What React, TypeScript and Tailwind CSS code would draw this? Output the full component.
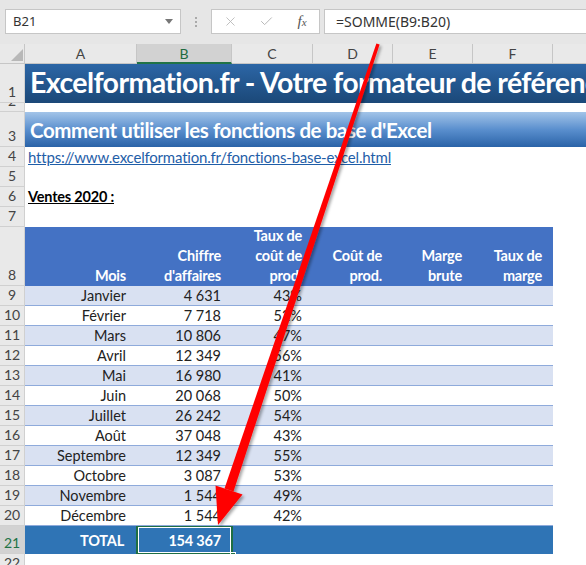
import React from "react";
import { X, Check } from "lucide-react";

const months: [string, string, string][] = [
  ["Janvier", "4\u00a0631", "43%"],
  ["Février", "7\u00a0718", "52%"],
  ["Mars", "10\u00a0806", "47%"],
  ["Avril", "12\u00a0349", "56%"],
  ["Mai", "16\u00a0980", "41%"],
  ["Juin", "20\u00a0068", "50%"],
  ["Juillet", "26\u00a0242", "54%"],
  ["Août", "37\u00a0048", "43%"],
  ["Septembre", "12\u00a0349", "55%"],
  ["Octobre", "3\u00a0087", "53%"],
  ["Novembre", "1\u00a0544", "49%"],
  ["Décembre", "1\u00a0544", "42%"],
];

function RH({ n, h, sel }: { n: number; h: string; sel?: boolean }) {
  return (
    <div
      className={`${h} w-[25px] shrink-0 overflow-hidden border-r border-b border-[#d0d0d0] flex items-end justify-center text-[14px] leading-[20px] ${
        sel ? "bg-[#d2d2d2] text-[#217346]" : "bg-[#e9e9e9] text-[#444]"
      }`}
    >
      <span>{n}</span>
    </div>
  );
}

function Row({
  n,
  h,
  sel,
  children,
}: {
  n: number;
  h: string;
  sel?: boolean;
  children?: React.ReactNode;
}) {
  return (
    <div className={`flex ${h}`}>
      <RH n={n} h={h} sel={sel} />
      <div className="flex-1 min-w-0 overflow-hidden bg-white">{children}</div>
    </div>
  );
}

export default function App() {
  return (
    <div className="relative w-[586px] h-[565px] overflow-hidden bg-white font-['Lato','Liberation_Sans',sans-serif] text-[#222]">
      {/* Toolbar */}
      <div className="h-[44px] bg-[#e6e6e6] flex items-start pt-[9px] font-['Noto_Sans','Open_Sans',sans-serif]">
        <div className="ml-[5px] w-[176px] h-[25px] bg-white border border-[#c6c6c6] flex items-center justify-between pl-[7px] pr-[7px]">
          <span className="text-[13px] text-[#333]">B21</span>
          <svg width="8" height="5" viewBox="0 0 8 5">
            <path d="M0 0 L8 0 L4 5 Z" fill="#777" />
          </svg>
        </div>
        <div className="w-[30px] h-[25px] flex flex-col items-center justify-center gap-[2px]">
          <span className="w-[2px] h-[2px] bg-[#aaa]" />
          <span className="w-[2px] h-[2px] bg-[#aaa]" />
          <span className="w-[2px] h-[2px] bg-[#aaa]" />
        </div>
        <div className="w-[109px] h-[25px] bg-white border border-[#c6c6c6] flex items-center">
          <div className="w-[36px] flex justify-center pl-[1px]">
            <X size={15} strokeWidth={1.4} color="#b8b8b8" />
          </div>
          <div className="w-[37px] flex justify-center">
            <Check size={15} strokeWidth={1.6} color="#b8b8b8" />
          </div>
          <div className="w-[34px] flex justify-center">
            <span className="font-['Liberation_Serif',serif] italic text-[15px] text-[#555] leading-none">
              f<span className="text-[11px]">x</span>
            </span>
          </div>
        </div>
        <div className="ml-[4px] flex-1 h-[25px] bg-white border border-[#c6c6c6] border-r-0 flex items-center pl-[11px]">
          <span className="text-[14px] text-[#333]">=SOMME(B9:B20)</span>
        </div>
      </div>

      {/* Column headers */}
      <div className="flex h-[20px] bg-[#e9e9e9] text-[14px] text-[#444]">
        <div className="w-[25px] shrink-0 border-r border-b border-[#c6c6c6] relative">
          <svg className="absolute left-[11px] top-[5px]" width="12" height="12" viewBox="0 0 12 12">
            <path d="M12 0 L12 12 L0 12 Z" fill="#b8b8b8" />
          </svg>
        </div>
        <div className="w-[112px] shrink-0 border-r border-b border-[#c6c6c6] flex items-center justify-center">A</div>
        <div className="w-[95px] shrink-0 border-r border-[#c6c6c6] border-b-2 border-b-[#217346] bg-[#d2d2d2] text-[#1e6b40] flex items-center justify-center">B</div>
        <div className="w-[81px] shrink-0 border-r border-b border-[#c6c6c6] flex items-center justify-center">C</div>
        <div className="w-[80px] shrink-0 border-r border-b border-[#c6c6c6] flex items-center justify-center">D</div>
        <div className="w-[80px] shrink-0 border-r border-b border-[#c6c6c6] flex items-center justify-center">E</div>
        <div className="w-[80px] shrink-0 border-r border-b border-[#c6c6c6] flex items-center justify-center">F</div>
        <div className="flex-1 border-b border-[#c6c6c6]" />
      </div>

      {/* Row 1 */}
      <Row n={1} h="h-[39px]">
        <div className="h-full bg-gradient-to-b from-[#2c66a6] to-[#1b4878] flex items-end pl-[5px] pb-[4px] whitespace-nowrap">
          <span className="text-white font-bold text-[28.5px] leading-[33px] tracking-[-0.6px]">
            Excelformation.fr - Votre formateur de référence
          </span>
        </div>
      </Row>
      <Row n={2} h="h-[9px]" />
      <Row n={3} h="h-[35px]">
        <div className="h-full bg-gradient-to-b from-[#a3c4e8] via-[#5a8fce] to-[#2a63a8] flex items-end pl-[5px] pb-[4px] whitespace-nowrap">
          <span className="text-white font-bold text-[20.5px] leading-[26px] tracking-[-0.4px]">
            Comment utiliser les fonctions de base d'Excel
          </span>
        </div>
      </Row>
      <Row n={4} h="h-[20px]">
        <div className="pl-[3px] leading-[20px] text-[15px] tracking-[-0.2px] text-[#1f5ea8] underline whitespace-nowrap">
          https://www.excelformation.fr/fonctions-base-excel.html
        </div>
      </Row>
      <Row n={5} h="h-[20px]" />
      <Row n={6} h="h-[20px]">
        <div className="pl-[3px] leading-[20px] text-[14.5px] tracking-[-0.2px] font-bold underline text-black whitespace-nowrap">
          Ventes 2020 :
        </div>
      </Row>
      <Row n={7} h="h-[20px]" />

      {/* Row 8 header */}
      <Row n={8} h="h-[59px]">
        <div className="h-full flex w-[528px] bg-[#4472c4] text-white font-bold text-[14.5px] leading-[20px] tracking-[-0.2px] text-right">
          <div className="w-[112px] flex flex-col justify-end pr-[11px]">Mois</div>
          <div className="w-[95px] flex flex-col justify-end pr-[11px]">
            <span>Chiffre</span>
            <span>d'affaires</span>
          </div>
          <div className="w-[81px] flex flex-col justify-end pr-[11px]">
            <span>Taux de</span>
            <span>coût de</span>
            <span>prod.</span>
          </div>
          <div className="w-[80px] flex flex-col justify-end pr-[11px]">
            <span>Coût de</span>
            <span>prod.</span>
          </div>
          <div className="w-[80px] flex flex-col justify-end pr-[11px]">
            <span>Marge</span>
            <span>brute</span>
          </div>
          <div className="w-[80px] flex flex-col justify-end pr-[11px]">
            <span>Taux de</span>
            <span>marge</span>
          </div>
        </div>
      </Row>

      {months.map(([m, v, p], i) => (
        <Row key={m} n={9 + i} h="h-[20px]">
          <div
            className={`h-full w-[528px] flex border-b border-[#8eaadb] text-[14.5px] leading-[20px] text-[#222] text-right ${
              i % 2 === 0 ? "bg-[#d9e1f2]" : "bg-white"
            }`}
          >
            <div className="w-[112px] pr-[11px]">{m}</div>
            <div className="w-[95px] pr-[11px]">{v}</div>
            <div className="w-[81px] pr-[11px]">{p}</div>
            <div className="w-[80px]" />
            <div className="w-[80px]" />
            <div className="w-[80px]" />
          </div>
        </Row>
      ))}

      {/* Total */}
      <Row n={21} h="h-[28px]" sel>
        <div className="h-full w-[528px] flex bg-[#2f74b5] text-white font-bold text-[14.5px] tracking-[-0.2px] text-right">
          <div className="w-[112px] pr-[13px] flex items-center justify-end pt-[1px]">TOTAL</div>
          <div className="w-[95px] pr-[11px] flex items-center justify-end pt-[1px] relative">
            154&nbsp;367
            <div className="absolute left-[-1px] top-[-1px] right-[-1px] bottom-[-1px] border-2 border-[#1e6e43]">
              <div className="absolute inset-0 border border-white" />
            </div>
            <div className="absolute right-[-4px] bottom-[-4px] w-[6px] h-[6px] bg-[#1e6e43] border border-white" />
          </div>
        </div>
      </Row>
      <Row n={22} h="h-[20px]" />

      {/* Red arrow overlay */}
      <svg className="absolute left-0 top-0 pointer-events-none" width="586" height="565" viewBox="0 0 586 565">
        <defs>
          <filter id="sh" x="-20%" y="-20%" width="140%" height="140%">
            <feDropShadow dx="2" dy="2" stdDeviation="1.5" floodColor="#000" floodOpacity="0.35" />
          </filter>
        </defs>
        <g filter="url(#sh)" fill="#ff0000">
          <polygon points="379.6,44.5 376.4,43.5 224.5,488.6 233.5,491.4" />
          <polygon points="218,525 242.5,494.5 215.5,485.5" />
        </g>
      </svg>
    </div>
  );
}
